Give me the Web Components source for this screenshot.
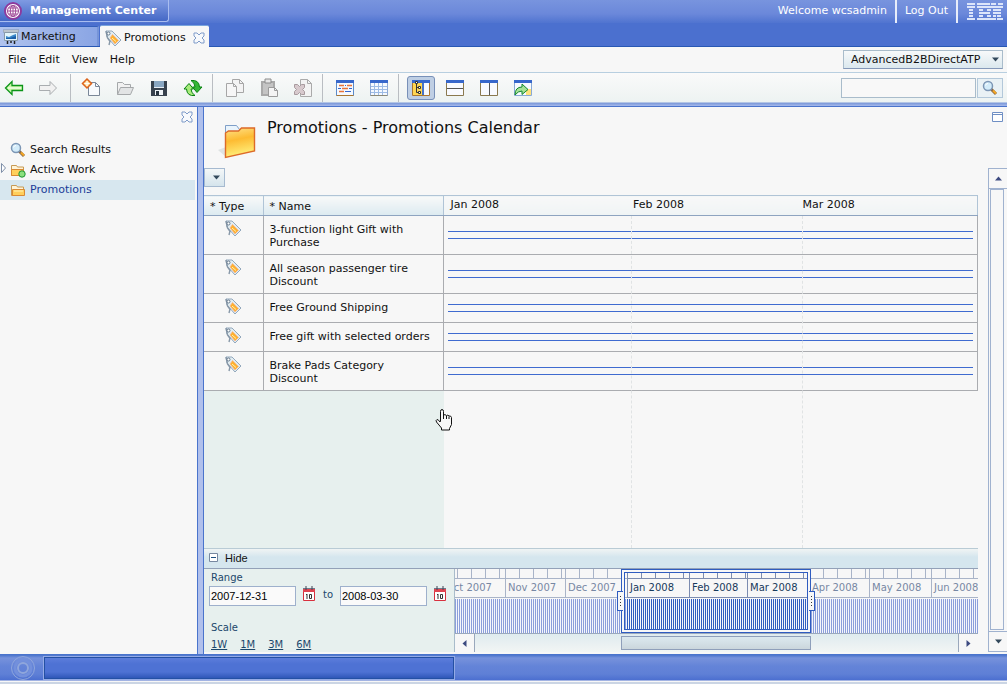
<!DOCTYPE html>
<html lang="en">
<head>
<meta charset="utf-8">
<title>Management Center</title>
<style>
html, body { margin: 0; background: #f7f7f7; }
body { font: 11px/14px "DejaVu Sans", Verdana, sans-serif; color: #111; }
</style>
</head>
<body>
<mc-app></mc-app>

<script>
const icons = {
  globe: [18, `<circle cx="9" cy="9" r="8" fill="#fff" stroke="#8c3a9e" stroke-width="2"/><g fill="none" stroke="#a04a98" stroke-width="1"><circle cx="9" cy="9" r="5.5"/><ellipse cx="9" cy="9" rx="2.7" ry="5.5"/><path d="M9 3v12M3 9h12M4.5 6h9M4.5 12h9"/></g>`],
  easel: [16, `<path d="M4.500 12v3M11.500 12v3M8 12v2" stroke="#222" stroke-width="1.500" fill="none"/><path d="M0 1h16v2H0z" fill="#dfe4ea" stroke="#68788c" stroke-width=".6"/><path d="M1.500 3.500h13v8h-13z" fill="#e2f5fc" stroke="#8899a8"/><path d="M3 7l3 1 4-2 3-1v5H3z" fill="#3a88c8"/><path d="M3 9l4 0 6-2v3H3z" fill="#1c5fa8"/>`],
  tag: [18, `<path d="M2 2h6l9 9-6 6-8-9z" fill="#e2edf2" stroke="#93a8bc"/><path d="M2 2l1.500 7 3 4M6 12l-1 4" fill="none" stroke="#8898a8" stroke-width="1.400"/><path d="M8.500 5.500l6 6-3.500 3.500L6 9z" fill="#fdb030" stroke="#f6b790" stroke-width=".8"/><path d="M8 9l4 3.500" stroke="#fff2b0"/><circle cx="4.500" cy="4.500" r="1.500" fill="#fff" stroke="#64788c"/>`],
  cross: [12, `<path d="M1 1h3l2 2 2-2h3v3L9 6l2 2v3H8L6 9l-2 2H1V8l2-2-2-2z" fill="#f7f9fc" stroke="#7f9bc9"/>`],
  back: [20, `<path d="M1.500 10L8 3.500v4h10.500v5H8v4z" fill="#c9f7a8" stroke="#0b9418" stroke-width="1.300"/><path d="M4 10h13" stroke="#fff"/>`],
  forward: [20, `<path d="M18.500 10L12 3.500v4H1.500v5H12v4z" fill="#f1f1f1" stroke="#a9adb0"/>`],
  newdoc: [20, `<path d="M7.500 4.500h7l4 4v9h-11z" fill="#f7fafd" stroke="#7a8798"/><path d="M14.500 4.500v4h4" fill="none" stroke="#7a8798"/><path d="M6 1l4.500 4.500L6 10 1.500 5.500z" fill="#ffe2a0" stroke="#dd641c" stroke-width="1.500"/><path d="M6 3v5M3.500 5.500h5" stroke="#fff"/>`],
  open: [20, `<path d="M2.500 16.500v-12h5l2 2h6v3" fill="#f1f1f1" stroke="#a5a8aa"/><path d="M2.500 16.500l3-7h13l-3 7z" fill="#e2e4e5" stroke="#a5a8aa"/>`],
  save: [18, `<path d="M1 2h16v15H1z" fill="#36414d"/><path d="M4 2h10v6H4z" fill="#89a7c2"/><path d="M4 8h10v1H4z" fill="#e6edf4"/><path d="M5 11h8v5H5z" fill="#eef3f7"/><path d="M6 12h3v4H6z" fill="#273440"/>`],
  refresh: [20, `<path d="M8 2.500q8-1 8.500 6.500h2.500l-5 5.500L9.500 9H12q0-4-4-6.500z" fill="#35b635" stroke="#07820e"/><path d="M12 17.500Q4 18.500 3.500 11H1l5-5.500L10.500 11H8q0 4 4 6.500z" fill="#a8eb7c" stroke="#07820e"/>`],
  copy: [20, `<path d="M7.500 1.500h7l4 4v9h-11z" fill="#f3f3f3" stroke="#a6a6a6"/><path d="M1.500 5.500h7l3 3v10h-10z" fill="#f6f6f6" stroke="#a6a6a6"/><path d="M8.500 5.500v3h3M14.500 1.500v4h4" fill="none" stroke="#a6a6a6"/>`],
  paste: [20, `<path d="M2 3h14v15H2z" fill="#a9a9a9"/><path d="M4 5h10v11H4z" fill="#c4c4c4"/><path d="M6 1h6v4H6z" fill="#e5e5e5" stroke="#8c8c8c"/><path d="M9.500 9.500h6l3 3v6h-9z" fill="#f4f4f4" stroke="#9b9b9b"/><path d="M15.500 9.500v3h3" fill="none" stroke="#9b9b9b"/>`],
  remove: [20, `<path d="M7.500 1.500h7l4 4v13h-11z" fill="#f3f3f3" stroke="#aaa"/><path d="M14.500 1.500v4h4" fill="none" stroke="#aaa"/><path d="M1.500 6.500h3l2 2 2-2h3v3l-2 2 2 2v3h-3l-2-2-2 2h-3v-3l2-2-2-2z" fill="#d7c9cd" stroke="#a89a9e"/>`],
  winlist: [20, `<path d="M1.500 2.500h17v15h-17z" fill="#f5f9ff" stroke="#5c8bc9"/><path d="M1 2h18v3H1z" fill="#3767cb"/><path d="M1.500 17.500h17" stroke="#a9752f"/><path d="M4 7.500h5M12 7.500h5M7 10.500h6M4 13.500h5" stroke="#e8743a" stroke-width="1.500"/><path d="M10 7.500h1M3 10.500h3M14 10.500h3M10 13.500h6" stroke="#3767cb"/>`],
  wingrid: [20, `<path d="M1.500 2.500h17v15h-17z" fill="#f5f9ff" stroke="#8ea9d5"/><path d="M1 2h18v3H1z" fill="#3767cb"/><path d="M5.500 5v13M9.500 5v13M13.500 5v13M2 8.500h16M2 11.500h16M2 14.500h16" stroke="#9dbbe5"/><path d="M1.500 17.500h17" stroke="#8a8878"/>`],
  wintree: [20, `<path d="M1.500 2.500h17v15h-17z" fill="#f8faff" stroke="#a9752f"/><path d="M2 3h9v14H2z" fill="#ffd652"/><path d="M11 5h2v12h-2z" fill="#4774c9"/><path d="M1 2h18v3H1z" fill="#3767cb"/><path d="M5.500 5v9.500h3M5 9.500h3" fill="none" stroke="#333"/><path d="M4.500 3.500h2v2h-2zM7.500 8.500h2v2h-2zM7.500 13.500h2v2h-2z" fill="#fff" stroke="#333"/>`],
  winrow: [20, `<path d="M1.500 2.500h17v15h-17z" fill="#f8faff" stroke="#8a794f"/><path d="M1 2h18v3H1z" fill="#3767cb"/><path d="M2 10.500h16" stroke="#555"/>`],
  wincol: [20, `<path d="M1.500 2.500h17v15h-17z" fill="#f8faff" stroke="#8a794f"/><path d="M1 2h18v3H1z" fill="#3767cb"/><path d="M10.500 5v12" stroke="#555"/>`],
  wingo: [20, `<path d="M1.500 2.500h17v15h-17z" fill="#f8faff" stroke="#88a9d5"/><path d="M1 2h18v3H1z" fill="#3767cb"/><path d="M13 11h5v6h-5z" fill="#ffe27a"/><path d="M2 17q0-8 7-8V6l6 5.500-6 5V13q-4 0-7 4z" fill="#a6e296" stroke="#11872c"/>`],
  lens: [16, `<path d="M8.500 8.500L14 14" stroke="#8a6a48" stroke-width="3"/><path d="M11 10.500l3 3" stroke="#f5a623" stroke-width="2"/><circle cx="6" cy="6" r="4.500" fill="#d3ecfa" stroke="#7c96b5" stroke-width="1.500"/><path d="M3.500 5.500q.5-2 2.500-2" fill="none" stroke="#fff"/>`],
  folder: [16, `<path d="M1.500 13.500v-10h5l1 1.500h6v8.500z" fill="#fff4d8" stroke="#c79a54"/><path d="M2.500 13.500v-6h12v6z" fill="#ffcf5c" stroke="#d98a34"/><path d="M4 9h9" stroke="#fff3b8"/>`],
  work: [16, `<path d="M1.500 13.500v-10h5l1 1.500h6v8.500z" fill="#fff4d8" stroke="#c79a54"/><path d="M1.500 13.500v-6h12v6z" fill="#ffcf5c" stroke="#d98a34"/><circle cx="12" cy="12" r="3.200" fill="#8be07e" stroke="#1f9434"/>`],
  bigfolder: [40, `<path d="M0 29l8-3v10z" fill="#dfe3e3"/><path d="M7.500 34V4.500h11l3 4h3v4z" fill="#eaf4fc" stroke="#7f9fc8"/><path d="M7.500 36.500V12l3-2h10l3-3h13v23z" fill="url(#f)" stroke="#dd6a28" stroke-width="1.400"/><defs><linearGradient id="f" x2=".2" y2="1"><stop stop-color="#ffe28a"/><stop offset=".45" stop-color="#fdbb32"/><stop offset="1" stop-color="#fff07c"/></linearGradient></defs>`],
  date: [16, `<path d="M2.500 3.500h11v11h-11z" fill="#fff" stroke="#d8303e"/><path d="M2 2h12v4H2z" fill="#df4450"/><path d="M2 2.500h12" stroke="#6b7f90"/><path d="M5 0v4M11 0v4" stroke="#445"/><path d="M6 8v5M5 8.500h1M8.500 8.500h2v4h-2z" fill="none" stroke="#333"/>`],
  box: [12, `<path d="M.5 1.500h10v9H.5z" fill="#fff" stroke="#6f8fc4"/><path d="M1 3.500h9" stroke="#6f8fc4"/>`],
  minus: [9, `<path d="M.5.5h8v8h-8z" fill="#fff" stroke="#7788a0"/><path d="M2 4.500h5" stroke="#1c4f80"/>`],
  up: [9, `<path d="M1 6.500h7L4.500 2.500z" fill="#3d4a80"/>`],
  down: [9, `<path d="M1 2.500h7L4.500 6.500z" fill="#33495c"/>`],
  left: [9, `<path d="M6.500 1v7L2.500 4.500z" fill="#3d4a80"/>`],
  right: [9, `<path d="M2.500 1v7l4-3.500z" fill="#3d4a80"/>`],
  twisty: [12, `<path d="M3.500 1.500l4 4.500-4 4.500z" fill="#fff" stroke="#7f8fa8"/>`],
  rings: [26, `<g fill="none"><circle cx="13" cy="13" r="11.500" stroke="#8fa6dc"/><circle cx="13" cy="13" r="5" stroke="#8fa6dc" stroke-width="2"/><circle cx="13" cy="13" r="8" stroke="#7390dc" stroke-width="3"/></g>`],
  hand: [24, `<path d="M8.500 13V3.500q0-2 1.500-2t1.500 2V7q1.500-1 3 .5 1.500-1 2.500.5 2-.5 2.500 1.500v7l-2 4v1.500h-8V20l-5-6q-1-2 .500-2.500 1.500 0 3 2.500z" fill="#f7f7f7" stroke="#111"/><path d="M11.500 7v4M14.500 8v3M17 8.500V11" stroke="#111"/>`],
  logo: [36, `<path d="M0 1h8M10 1h13M24 1h5M31 1h5M0 4h8M10 4h14M24 4h6M30 4h6M2 7h4M12 7h4M20 7h4M26 7h5M30 7h4M2 10h4M12 10h11M26 10h8M2 13h4M12 13h4M20 13h4M26 13h3M30 13h4M0 16h8M10 16h14M24 16h5M30 16h6" stroke="#dce5fa" stroke-width="1.800"/>`, 18]
};

function define(name, css, html, after) {
  const t = document.createElement('template');
  t.innerHTML = `<style>
    *{box-sizing:border-box} :host{display:block}
    button{font:inherit;color:inherit;border:0;background:none;padding:0;margin:0;display:flex;align-items:center;justify-content:center}
    ${css}</style>${html}`;
  customElements.define(name, class extends HTMLElement {
    constructor() {
      super();
      this.attachShadow({ mode: 'open' }).append(t.content.cloneNode(true));
    }
    connectedCallback() { if (after) after(this, this.shadowRoot); }
  });
}

define('mc-icon', ':host{display:inline-block;flex:none;line-height:0} svg{display:block}', '', (el, root) => {
  const [w, body, h = w] = icons[el.getAttribute('name')];
  root.innerHTML += `<svg width="${w}" height="${h}" viewBox="0 0 ${w} ${h}" aria-hidden="true">${body}</svg>`;
});

define('mc-header', `
  :host{display:flex;height:23px;background:linear-gradient(#7894de,#6b88da 60%,#5074d0);color:#fff}
  h1{margin:0;display:flex;align-items:center;gap:8px;min-width:169px;height:22px;padding:0 8px 0 4px;font:bold 11px/20px "DejaVu Sans",sans-serif;white-space:nowrap;
    background:linear-gradient(#7f9ae2,#4468c6);border:solid #a9bdf0;border-width:0 1px 1px 0;border-radius:0 0 3px 0}
  nav{margin-left:auto;display:flex;line-height:22px}
  nav>*{padding:0 8px;color:#fff;text-decoration:none;border-right:2px solid #e8edfa}
  nav>mc-icon{border:0;padding:3px 4px 0 9px;height:22px}`,
  `<h1><mc-icon name="globe"></mc-icon>Management Center</h1>
   <nav><span>Welcome wcsadmin</span><a href="#">Log Out</a><mc-icon name="logo"></mc-icon></nav>`);

define('mc-tabs', `
  :host{display:flex;align-items:flex-end;height:24px;padding-top:3px;background:#4b70cf;border-bottom:1px solid #2858b4}
  button{height:20px;padding:0 3px;gap:2px;justify-content:flex-start}
  .idle{width:99px;background:linear-gradient(90deg,#b0c3ee,#8aa5e4);border-right:2px solid #7694d8;border-top:1px solid #3460bc}
  .on{height:22px;width:109px;margin:0 0 -1px 1px;padding:2px 4px 0;background:#f7f7f7;border-top:1px solid #7aa5dc;border-radius:2px 2px 0 0}
  .on mc-icon+mc-icon{margin-left:auto}`,
  `<button class="idle"><mc-icon name="easel"></mc-icon>Marketing</button>
   <button class="on"><mc-icon name="tag"></mc-icon>Promotions<mc-icon name="cross"></mc-icon></button>`);

define('mc-menubar', `
  :host{display:flex;height:26px;align-items:center;padding:0 4px 0 8px;gap:12px;border-bottom:1px solid #b8cfe0;background:#f7f7f7}
  label{margin-left:auto;position:relative;display:flex}
  select{appearance:none;width:160px;height:19px;font:inherit;color:#111;padding:0 18px 0 7px;border:1px solid #a9bccb;border-bottom-color:#8598b8;border-radius:0;background:linear-gradient(#f7f9fa,#dbe8ee)}
  label mc-icon{position:absolute;right:3px;top:5px;pointer-events:none}`,
  `<button>File</button><button>Edit</button><button>View</button><button>Help</button>
   <label><select aria-label="Store"><option>AdvancedB2BDirectATP</option></select><mc-icon name="down"></mc-icon></label>`);

define('mc-toolbar', `
  :host{display:flex;height:34px;align-items:center;padding:0 4px 4px 0;background:linear-gradient(#fafafa,#edf3f2 29px,#7a97d8 30px,#a6baec);border-bottom:1px solid #4a74cc}
  .group{display:flex;gap:6px;padding:0 5px 0 8px;border-right:1px solid #b9bdc2;height:28px;align-items:center}
  .group:nth-of-type(1){padding:0 8px 0 0}
  .group:nth-of-type(2){padding-left:6px}
  .group:nth-of-type(5){border:0}
  button{width:28px;height:24px}
  .on{border:1px solid #7890b8;border-radius:3px;background:#bfcfe4}
  form{margin-left:auto;display:flex;gap:1px}
  input{width:135px;height:20px;border:1px solid #a9bccb;background:#f8f8f8;padding:0 4px}
  form button{width:26px;height:20px;border:1px solid #b3c8da;background:#e9f1f5}`,
  `${[['back','forward'],['newdoc','open','save','refresh'],['copy','paste','remove'],['winlist','wingrid'],['wintree','winrow','wincol','wingo']]
    .map(g => `<div class="group">${g.map(i => `<button class="${i === 'wintree' ? 'on' : ''}" aria-label="${i}"><mc-icon name="${i}"></mc-icon></button>`).join('')}</div>`).join('')}
   <form><input type="text" aria-label="Search"><button type="button" aria-label="Search"><mc-icon name="lens"></mc-icon></button></form>`);

define('mc-tree-item', `
  a{display:flex;align-items:center;height:20px;color:#111;text-decoration:none;gap:4px;padding-left:10px;position:relative}
  :host([selected]) a{background:#d7e7ef;color:#203c98}
  .twisty{position:absolute;left:-2px;top:2px}`,
  `<a href="#"><slot></slot></a>`, (el, root) => {
    const a = root.querySelector('a');
    const add = (n, c) => { const i = document.createElement('mc-icon'); i.setAttribute('name', n); i.className = c; a.prepend(i); };
    add(el.getAttribute('icon'), '');
    if (el.hasAttribute('branch')) add('twisty', 'twisty');
  });

define('mc-sidebar', `
  :host{display:flex;flex-direction:column;width:198px;flex:none;background:#f7f7f7;border-right:1px solid #4a74cc;padding-right:2px}
  button{align-self:flex-end;margin:4px 2px 17px 0}`,
  `<button aria-label="Close"><mc-icon name="cross"></mc-icon></button>
   <nav><mc-tree-item icon="lens">Search Results</mc-tree-item><mc-tree-item icon="work" branch>Active Work</mc-tree-item><mc-tree-item icon="folder" selected>Promotions</mc-tree-item></nav>`);

const rows = ['3-function light Gift with<br>Purchase', 'All season passenger tire<br>Discount', 'Free Ground Shipping', 'Free gift with selected orders', 'Brake Pads Category<br>Discount'];
define('mc-calendar', `
  :host{display:block;flex:1;position:relative;background:linear-gradient(90deg,#e7f0ee 240px,#f7f7f7 240px)}
  table{width:100%;border-collapse:collapse;table-layout:fixed;background:#f7f7f7}
  .c1{width:59px}.c2{width:180px}
  th{font-weight:normal;text-align:left;height:20px;padding:2px 6px 0;border:1px solid #b0c4d6;border-bottom-color:#8ea4c0;background:linear-gradient(#f8f9f9,#dceaf0)}
  th:first-child,td:first-child{border-left:0}
  th:last-child{padding:0;background:linear-gradient(#f8f8f8,#eff4f5)}
  tbody tr{height:29px}
  td{border:1px solid #aaacb0;padding:7px 6px 5px;line-height:13px;vertical-align:top}
  td:first-child{padding:3px 0 0}
  td:first-child mc-icon{display:block;width:18px;margin:0 auto}
  td:last-child{padding:0 4px;vertical-align:middle}
  .bar{height:8px;border:solid #3f6bd0;border-width:1px 0}
  .months{display:grid;grid-template-columns:183fr 170fr 175fr;padding-left:7px;line-height:16px;height:18px}
  .lines{position:absolute;left:240px;right:0;top:21px;bottom:0;display:grid;grid-template-columns:188fr 171fr 175fr;pointer-events:none}
  .lines i{border-right:1px dashed #e0e3e4}.lines i:last-child{border:0}
  .cursor{position:absolute;left:228px;top:213px}`,
  `<table><colgroup><col class="c1"><col class="c2"><col></colgroup>
   <thead><tr><th>* Type</th><th>* Name</th><th><div class="months"><span>Jan 2008</span><span>Feb 2008</span><span>Mar 2008</span></div></th></tr></thead>
   <tbody>${rows.map(r => `<tr><td><mc-icon name="tag"></mc-icon></td><td>${r}</td><td><div class="bar"></div></td></tr>`).join('')}</tbody></table>
   <div class="lines"><i></i><i></i><i></i></div><mc-icon class="cursor" name="hand"></mc-icon>`);

const months = [['Oct 2007', 31], ['Nov 2007', 30], ['Dec 2007', 31], ['Jan 2008', 31], ['Feb 2008', 29], ['Mar 2008', 31], ['Apr 2008', 30], ['May 2008', 31], ['Jun 2008', 30]];
define('mc-timeline', `
  :host{display:flex;flex-direction:column;flex:1;min-width:0;position:relative;overflow:hidden;border-left:1px solid #a9bccb;background:#f7f7f7;font-size:10px}
  .strip{display:flex;height:65px;margin-left:-12px;border-bottom:1px solid #9aa8bc}
  .month{flex:none;width:calc(var(--days)*2px);color:#7788a4;--tick:#a9b4c8;--stripe:#8b9edb}
  .sel{color:#173a5c;--tick:#7c8cb0;--stripe:#2f5cc0}
  .weeks{height:9px;background:repeating-linear-gradient(90deg,var(--tick) 0 1px,transparent 1px 14px)}
  .name{height:20px;line-height:18px;border:1px solid var(--tick);border-right:0;padding-left:2px;white-space:nowrap}
  .days{height:34px;margin-top:1px;background:repeating-linear-gradient(90deg,var(--stripe) 0 1px,#f4f6fb 1px 2px)}
  .window{position:absolute;left:166px;top:0;width:190px;height:64px;border:1px solid #2f5cc0}
  .window::before{content:"";position:absolute;inset:0;border:2px solid #f7f7f7}
  .window::after{content:"";position:absolute;inset:2px;border:1px solid #2f5cc0}
  .grip{position:absolute;top:21px;width:6px;height:20px;border:1px solid #2f5cc0;background:#f7f7f7;z-index:1}
  .grip::after{content:"";position:absolute;left:2px;top:4px;height:11px;width:1px;background:repeating-linear-gradient(#333 0 1px,transparent 1px 3px)}
  .l{left:-5px;border-right:0}.r{right:-5px;border-left:0}
  .scroll{display:flex;justify-content:space-between;flex:1;background:linear-gradient(#dfebef,#f2f5f4);position:relative}
  .scroll button{width:20px;background:#f7f7f7;border:solid #9aa8bc;border-width:0 1px 0 0}
  .scroll button:last-child{border-width:0 0 0 1px}
  .thumb{position:absolute;left:166px;top:2px;width:190px;height:14px;border:1px solid #8f9fba;background:linear-gradient(#dce9ef,#cbd6dc)}`,
  `<div class="strip">${months.map(([n, d], i) => `<div class="month ${i > 2 && i < 6 ? 'sel' : ''}" style="--days:${d}"><div class="weeks"></div><div class="name">${n}</div><div class="days"></div></div>`).join('')}</div>
   <div class="window"><span class="grip l"></span><span class="grip r"></span></div>
   <div class="scroll"><button aria-label="Earlier"><mc-icon name="left"></mc-icon></button><span class="thumb"></span><button aria-label="Later"><mc-icon name="right"></mc-icon></button></div>`);

define('mc-range', `
  :host{display:block;flex:none;width:250px;padding:2px 0 0 7px;background:#e7f0ee;color:#1d486c;font-size:10px}
  .dates{display:flex;align-items:flex-start;margin:1px 0 15px -2px}
  input{width:87px;height:20px;border:1px solid #9eb0cc;background:#fafafa;font:11px "Liberation Sans",Arial,sans-serif;padding:0 1px;color:#000}
  .dates button{margin:0 5px}
  .to{width:18px;margin-top:2px;padding-left:1px}
  .scale{display:flex;gap:13px;margin-top:3px}
  a{color:inherit}`,
  `<label for="from">Range</label>
   <div class="dates"><input id="from" type="text" value="2007-12-31"><button aria-label="Pick start"><mc-icon name="date"></mc-icon></button><label class="to" for="until">to</label>
   <input id="until" type="text" value="2008-03-30"><button aria-label="Pick end"><mc-icon name="date"></mc-icon></button></div>
   <div>Scale</div><div class="scale"><a href="#">1W</a><a href="#">1M</a><a href="#">3M</a><a href="#">6M</a></div>`);

define('mc-workspace', `
  :host{display:flex;flex:1;min-width:0;flex-direction:column;border-left:1px solid #4a74cc;background:#f7f7f7}
  header{display:flex;height:61px;padding-left:14px}
  header>mc-icon{margin-top:14px}
  h2{margin:11px 0 0 9px;font:16px/20px "DejaVu Sans",sans-serif}
  header button{margin:4px 3px auto auto}
  .body{display:flex;flex:1}
  .main{display:flex;flex-direction:column;flex:1;min-width:0}
  .drop{width:21px;height:19px;border:1px solid #a6bad0;background:linear-gradient(#f4f7f8,#d5e4ec);padding-left:4px;margin-bottom:8px}
  .hide{height:21px;justify-content:flex-start;gap:7px;padding:0 5px 2px;font:11px "Liberation Sans",Arial,sans-serif;background:linear-gradient(#f0f4f4,#d5e6ee 8px);border-top:1px solid #b9cbd5;border-bottom:1px solid #93a1b8}
  .foot{display:flex;height:83px;margin-bottom:2px}
  .rail{width:19px;margin:0 0 2px 10px;border:solid #a0b2cf;border-width:1px 0 1px 1px;display:flex;flex-direction:column}
  .rail button{height:20px}
  .rail span{flex:1;width:14px;margin-left:1px;border:1px solid #a0b2cf}
  .rail button:first-child{border-bottom:1px solid #a0b2cf}.rail button:last-child{border-top:1px solid #a0b2cf;margin-top:1px}`,
  `<header><mc-icon name="bigfolder"></mc-icon><h2>Promotions - Promotions Calendar</h2><button aria-label="Maximize"><mc-icon name="box"></mc-icon></button></header>
   <div class="body"><div class="main"><button class="drop" aria-label="View"><mc-icon name="down"></mc-icon></button>
   <mc-calendar></mc-calendar><button class="hide"><mc-icon name="minus"></mc-icon>Hide</button>
   <div class="foot"><mc-range></mc-range><mc-timeline></mc-timeline></div></div>
   <div class="rail"><button aria-label="Up"><mc-icon name="up"></mc-icon></button><span></span><button aria-label="Down"><mc-icon name="down"></mc-icon></button></div></div>`);

define('mc-status', `
  :host{display:flex;align-items:center;height:30px;padding:0 0 3px 10px;gap:8px;background:linear-gradient(#4a74cc 1px,#7792dc 4px,#6484d8 12px,#5f80d6 20px,#4c6fd0 26px,#f7f7f7 27px 28px,#cbd5e4 28px)}
  div{width:410px;height:22px;background:linear-gradient(#5c7ddb,#4e72d4 6px,#4e72d4 14px,#2f57b8);border:1px solid #2450a4;outline:1px solid #94aae6}`,
  `<mc-icon name="rings"></mc-icon><div></div>`);

define('mc-app', `
  :host{display:flex;flex-direction:column;min-height:100vh}
  main{display:flex;flex:1;gap:5px;background:#b0c0ec}`,
  `<mc-header></mc-header><mc-tabs></mc-tabs><mc-menubar></mc-menubar><mc-toolbar></mc-toolbar>
   <main><mc-sidebar></mc-sidebar><mc-workspace></mc-workspace></main><mc-status></mc-status>`);
</script>
</body>
</html>
